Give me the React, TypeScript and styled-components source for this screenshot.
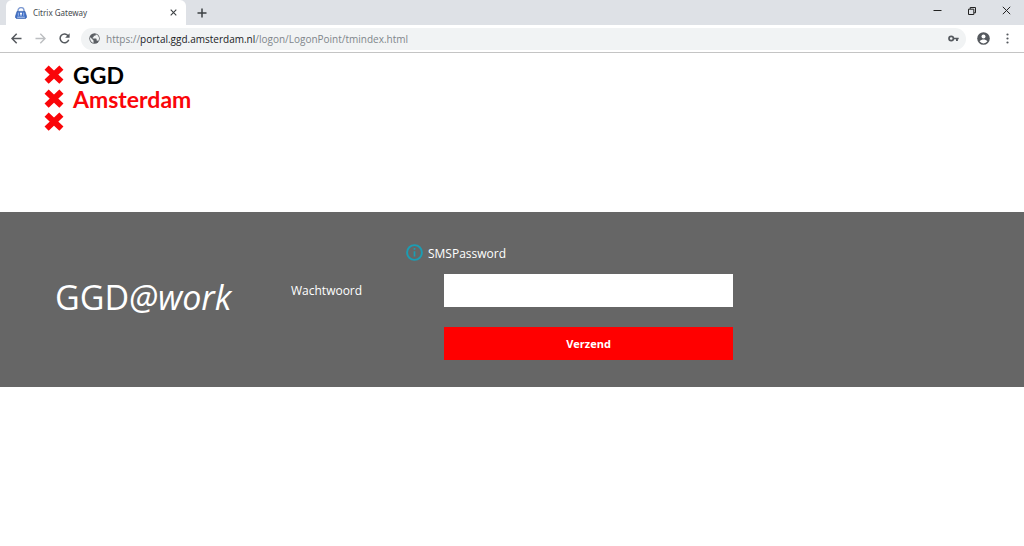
import React from "react";
import styled, { createGlobalStyle } from "styled-components";

const GlobalStyle = createGlobalStyle`
  * { box-sizing: border-box; }
  body {
    margin: 0;
    background: #fff;
    font-family: "Open Sans", "Noto Sans", sans-serif;
  }
  button, input { font-family: inherit; }
`;

const TabStrip = styled.header`
  display: flex;
  align-items: flex-end;
  height: 25px;
  padding-left: 6px;
  background: #dee1e6;
`;

const Tab = styled.div`
  display: flex;
  align-items: center;
  width: 180px;
  height: 25px;
  padding: 0 7px 0 9px;
  border-radius: 6px 6px 0 0;
  background: #fff;
`;

const TabTitle = styled.span`
  flex: 1;
  margin-left: 6px;
  font-family: "Noto Sans", sans-serif;
  font-size: 8px;
  line-height: 12px;
  color: #45494d;
`;

const IconButton = styled.button<{ $width: number; $height: number }>`
  display: flex;
  flex: none;
  align-items: center;
  justify-content: center;
  width: ${(p) => p.$width}px;
  height: ${(p) => p.$height}px;
  padding: 0;
  border: 0;
  background: none;
  color: #3c4043;
`;

const WindowControls = styled.div`
  display: flex;
  align-self: flex-start;
  margin-left: auto;
  padding-right: 1px;
`;

const Toolbar = styled.nav`
  display: flex;
  align-items: center;
  height: 28px;
  padding: 0 9px 0 4px;
  border-bottom: 1px solid #c4c4c4;
  background: #fff;
`;

const AddressBar = styled.div`
  display: flex;
  flex: 1;
  align-items: center;
  height: 22px;
  margin-left: 5px;
  padding: 0 6px 0 8px;
  border-radius: 11px;
  background: #f1f3f4;
`;

const Address = styled.div`
  flex: 1;
  margin-left: 6px;
  font-size: 10px;
  line-height: 14px;
  color: #80868b;
  white-space: nowrap;
  outline: none;
`;

const Host = styled.span`
  color: #202124;
`;

const Brand = styled.a`
  display: flex;
  gap: 9px;
  height: 159px;
  padding: 10px 44px 0;
  text-decoration: none;
`;

const BrandName = styled.span<{ $color: string }>`
  display: block;
  font-family: Lato, sans-serif;
  font-size: 23px;
  font-weight: 700;
  line-height: 24px;
  color: ${(p) => p.$color};
`;

const Band = styled.main`
  display: flex;
  align-items: center;
  min-height: 175px;
  padding: 27px 55px;
  background: #666;
  color: #fff;
`;

const Title = styled.h1`
  flex: none;
  width: 236px;
  margin: 0;
  padding-bottom: 6px;
  font-size: 34px;
  font-weight: 400;
  line-height: 44px;
`;

const LogonForm = styled.form`
  flex: 0 1 442px;
`;

const Notice = styled.p`
  display: flex;
  align-items: center;
  gap: 5px;
  margin: 0 0 9px;
  padding-left: 115px;
  font-size: 12px;
  line-height: 26px;
`;

const NoticeText = styled.span`
  padding-top: 4px;
  line-height: 22px;
`;

const Row = styled.div`
  display: grid;
  grid-template-columns: 153px 1fr;
  align-items: center;
  margin-bottom: 20px;

  &:last-child { margin-bottom: 0; }
`;

const Label = styled.label`
  font-size: 12px;
  line-height: 20px;
`;

const Field = styled.input`
  width: 100%;
  height: 33px;
  padding: 0 8px;
  border: 0;
  border-radius: 0;
  background: #fff;
  font-size: 12px;
`;

const Submit = styled.button`
  grid-column: 2;
  height: 33px;
  border: 0;
  background: #f00;
  color: #fff;
  font-size: 11px;
  font-weight: 700;
`;

const Favicon = () => (
  <svg width="12" height="12" viewBox="0 0 12 12" aria-hidden="true">
    <path d="M3 5V3.4a3 2.8 0 0 1 6 0V5" fill="none" stroke="#7f9bd2" strokeWidth="1.3" />
    <path d="M2 4.4h8L11.5 9.2a1.8 1.8 0 0 1-1.8 2.4H2.3A1.8 1.8 0 0 1 .5 9.2z" fill="#3f6fc6" stroke="#2c55a5" strokeWidth=".6" />
    <path d="M2.2 10.2h7.6" stroke="#dce7fa" strokeWidth=".8" />
    <path d="M3.3 5.6v3.2M8.7 5.6v3.2" stroke="#a9c0ea" strokeWidth=".9" />
    <circle cx="6" cy="6.5" r="1.1" fill="#fff" />
    <path d="M6 6.8v2" stroke="#fff" strokeWidth="1" />
  </svg>
);

const Globe = () => (
  <svg width="11" height="11" viewBox="0 0 11 11" aria-hidden="true">
    <circle cx="5.5" cy="5.5" r="5.2" fill="#5a5e63" />
    <path d="M1.3 4.2 4.5 7.4v2.5A4.5 4.5 0 0 1 1.3 4.2zM6.8 1.2v.6a1 1 0 0 1-1 1H4.7v1.1l-1 .5v1h3.2a.7.7 0 0 1 .7.7v1.4h.6a1 1 0 0 1 .9.7A4.5 4.5 0 0 0 6.8 1.2z" fill="#f1f3f4" />
  </svg>
);

const crossTops = [2, 26, 49];

const Crosses = () => (
  <svg width="20" height="72" viewBox="0 0 20 72" aria-hidden="true">
    {crossTops.map((top) => (
      <path key={top} d={`M2.6 ${top + 2.6}l14.8 14M17.4 ${top + 2.6}l-14.8 14`} stroke="#fa0509" strokeWidth="6" />
    ))}
  </svg>
);

const InfoIcon = () => (
  <svg width="17" height="17" viewBox="0 0 17 17" aria-hidden="true">
    <circle cx="8.5" cy="8.5" r="7.4" fill="none" stroke="#1b9db3" strokeWidth="1.9" />
    <path d="M8.5 7.2v5.3M8.5 4v1.7" stroke="#1b9db3" strokeWidth="1.7" />
  </svg>
);

export default function App() {
  return (
    <>
      <GlobalStyle />
      <TabStrip>
        <Tab>
          <Favicon />
          <TabTitle>Citrix Gateway</TabTitle>
          <IconButton $width={12} $height={12} aria-label="Close tab">
            <svg width="7" height="7" viewBox="0 0 7 7">
              <path d="M.7.7l5.6 5.6M6.3.7.7 6.3" stroke="currentColor" strokeWidth="1.1" />
            </svg>
          </IconButton>
        </Tab>
        <IconButton $width={32} $height={25} aria-label="New tab">
          <svg width="10" height="10" viewBox="0 0 10 10">
            <path d="M5 .5v9M.5 5h9" stroke="currentColor" strokeWidth="1.5" />
          </svg>
        </IconButton>
        <WindowControls>
          <IconButton $width={34} $height={21} aria-label="Minimize">
            <svg width="9" height="9" viewBox="0 0 9 9">
              <path d="M.5 4.5h8" stroke="#222" />
            </svg>
          </IconButton>
          <IconButton $width={35} $height={21} aria-label="Restore">
            <svg width="8" height="8" viewBox="0 0 8 8">
              <path d="M.5 2.2h5.3v5.3H.5zM2.2 2V.5h5.3v5.3H6" fill="none" stroke="#222" />
            </svg>
          </IconButton>
          <IconButton $width={34} $height={21} aria-label="Close">
            <svg width="9" height="9" viewBox="0 0 9 9">
              <path d="M.8.8l7.4 7.4M8.2.8.8 8.2" stroke="#222" />
            </svg>
          </IconButton>
        </WindowControls>
      </TabStrip>
      <Toolbar>
        <IconButton $width={24} $height={24} aria-label="Back">
          <svg width="11" height="11" viewBox="0 0 11 11">
            <path d="M10.5 5.5H1.2M5.7.8 1 5.5l4.7 4.7" fill="none" stroke="#55595e" strokeWidth="1.5" />
          </svg>
        </IconButton>
        <IconButton $width={24} $height={24} aria-label="Forward">
          <svg width="11" height="11" viewBox="0 0 11 11">
            <path d="M.5 5.5h9.3M5.3.8 10 5.5l-4.7 4.7" fill="none" stroke="#bcbec1" strokeWidth="1.4" />
          </svg>
        </IconButton>
        <IconButton $width={24} $height={24} aria-label="Reload">
          <svg width="11" height="11" viewBox="0 0 11 11">
            <path d="M9.2 2.9A4.4 4.4 0 1 0 9.7 6.8" fill="none" stroke="#55595e" strokeWidth="1.5" />
            <path d="M10.6.3v4.5H6.1z" fill="#55595e" />
          </svg>
        </IconButton>
        <AddressBar>
          <Globe />
          <Address role="textbox" aria-label="Address" contentEditable suppressContentEditableWarning spellCheck={false}>
            https://<Host>portal.ggd.amsterdam.nl</Host>/logon/LogonPoint/tmindex.html
          </Address>
          <IconButton $width={14} $height={14} aria-label="Saved passwords">
            <svg width="11" height="7" viewBox="0 0 11 7">
              <path d="M5 2.8h5.7v1.5H9.9V6H8V4.3H5z" fill="#55595e" />
              <circle cx="3.2" cy="3.5" r="2.2" fill="none" stroke="#55595e" strokeWidth="1.7" />
            </svg>
          </IconButton>
        </AddressBar>
        <IconButton $width={34} $height={24} aria-label="Profile">
          <svg width="13" height="13" viewBox="0 0 13 13">
            <circle cx="6.5" cy="6.5" r="6.3" fill="#55595e" />
            <circle cx="6.5" cy="4.4" r="2" fill="#fff" />
            <path d="M2.6 9.3c.9-1.3 2.5-1.8 3.9-1.8s3 .5 3.9 1.8a4.7 4.7 0 0 1-7.8 0z" fill="#fff" />
          </svg>
        </IconButton>
        <IconButton $width={15} $height={24} aria-label="Menu">
          <svg width="3" height="11" viewBox="0 0 3 11">
            <g fill="#55595e">
              <circle cx="1.5" cy="1.5" r="1.1" />
              <circle cx="1.5" cy="5.5" r="1.1" />
              <circle cx="1.5" cy="9.5" r="1.1" />
            </g>
          </svg>
        </IconButton>
      </Toolbar>
      <Brand href="#">
        <Crosses />
        <span>
          <BrandName $color="#000">GGD</BrandName>
          <BrandName $color="#fa0509">Amsterdam</BrandName>
        </span>
      </Brand>
      <Band>
        <Title>
          GGD<em>@work</em>
        </Title>
        <LogonForm onSubmit={(e) => e.preventDefault()}>
          <Notice>
            <InfoIcon />
            <NoticeText>SMSPassword</NoticeText>
          </Notice>
          <Row>
            <Label htmlFor="password">Wachtwoord</Label>
            <Field id="password" type="password" />
          </Row>
          <Row>
            <Submit type="submit">Verzend</Submit>
          </Row>
        </LogonForm>
      </Band>
    </>
  );
}
